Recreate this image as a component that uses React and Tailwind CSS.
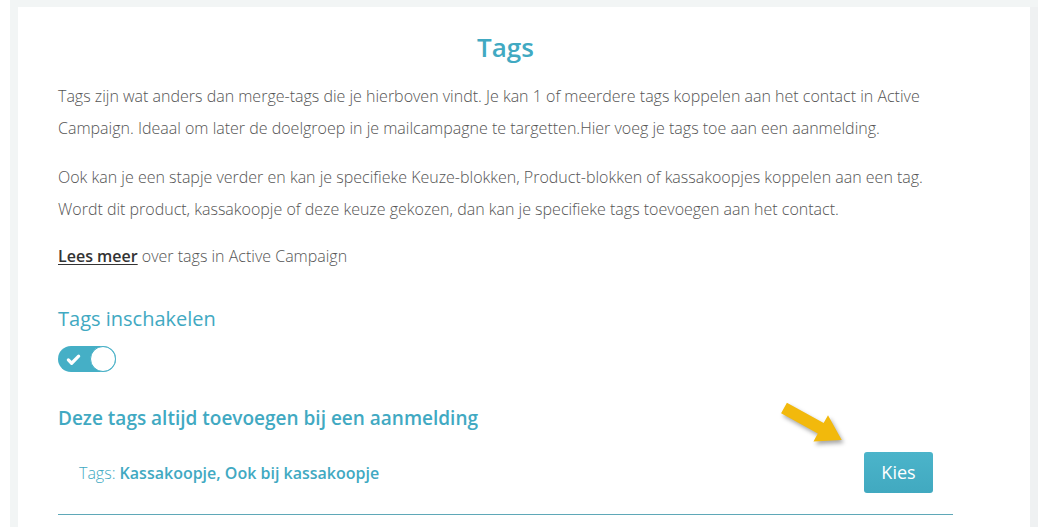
import React, { useState } from 'react';

const TEAL = 'text-[#41a9c2]';

function Toggle({ on, onChange }) {
  return (
    <button
      onClick={() => onChange(!on)}
      className="relative flex h-[26px] w-[58px] items-center rounded-full bg-[#45afc6]"
    >
      <svg viewBox="0 0 16 16" className="ml-[8px] h-[15px] w-[15px]">
        <path d="M2.5 8.5l3.5 3.5 7.5-7.5" fill="none" stroke="#fff" strokeWidth="3.4" strokeLinecap="round" strokeLinejoin="round" />
      </svg>
      <span className="absolute right-0 top-0 h-[26px] w-[26px] rounded-full border border-[#45afc6] bg-white" />
    </button>
  );
}

function Arrow() {
  // annotation arrow pointing at the Kies button
  return (
    <svg
      width="72"
      height="52"
      viewBox="0 0 72 52"
      className="pointer-events-none absolute left-[760px] top-[391px] drop-shadow-[2px_3px_2px_rgba(0,0,0,0.35)]"
    >
      <g transform="translate(6,10) rotate(29)">
        <polygon points="0,-6 42,-6 42,-15 66,0 42,15 42,6 0,6" fill="#f2b90c" />
      </g>
    </svg>
  );
}

export default function App() {
  const [enabled, setEnabled] = useState(true);

  return (
    <div className="flex h-[527px] w-full overflow-hidden bg-white" style={{ fontFamily: '"Open Sans", "Liberation Sans", sans-serif' }}>
      <div className="w-[10px] shrink-0 bg-white" />
      <div className="flex flex-1 bg-[#f2f5f5] pl-[8px] pt-[7px]">
        <div className="relative w-[1012px] shrink-0 bg-white px-[40px] pt-[24px]">
          <div className="w-[895px]">
            <h2 className={`mb-[17px] text-center text-[26px] font-semibold leading-[32px] ${TEAL}`}>Tags</h2>

            <p className="mb-[17px] text-[16px] font-light leading-[32px] text-[#555]">
              Tags zijn wat anders dan merge-tags die je hierboven vindt. Je kan 1 of meerdere tags koppelen aan het contact in Active Campaign. Ideaal om later de doelgroep in je mailcampagne te targetten.Hier voeg je tags toe aan een aanmelding.
            </p>

            <p className="mb-[15px] text-[16px] font-light leading-[32px] text-[#555]">
              Ook kan je een stapje verder en kan je specifieke Keuze-blokken, Product-blokken of kassakoopjes koppelen aan een tag. Wordt dit product, kassakoopje of deze keuze gekozen, dan kan je specifieke tags toevoegen aan het contact.
            </p>

            <p className="text-[16px] font-light leading-[32px] text-[#555]">
              <a href="#" className="font-semibold text-[#333] underline underline-offset-2">Lees meer</a> over tags in Active Campaign
            </p>

            <h3 className={`mt-[33px] text-[20px] leading-[28px] ${TEAL}`}>Tags inschakelen</h3>
            <div className="mt-[13px] flex">
              <Toggle on={enabled} onChange={setEnabled} />
            </div>

            <h3 className={`mt-[33px] text-[19px] font-semibold leading-[26px] ${TEAL}`}>
              Deze tags altijd toevoegen bij een aanmelding
            </h3>

            <div className="mt-[21px] flex items-center justify-between border-b border-[#5fa8b8] pb-[21px] pl-[21px] pr-[20px]">
              <span className={`text-[16px] font-light ${TEAL}`}>
                Tags: <span className="font-semibold">Kassakoopje, Ook bij kassakoopje</span>
              </span>
              <button className="h-[41px] w-[69px] rounded-[3px] bg-gradient-to-b from-[#4bb4ca] to-[#41a9c0] text-[18px] text-white">
                Kies
              </button>
            </div>
          </div>
          <Arrow />
        </div>
        <div className="flex-1 bg-[#eff1f2]" />
      </div>
    </div>
  );
}
